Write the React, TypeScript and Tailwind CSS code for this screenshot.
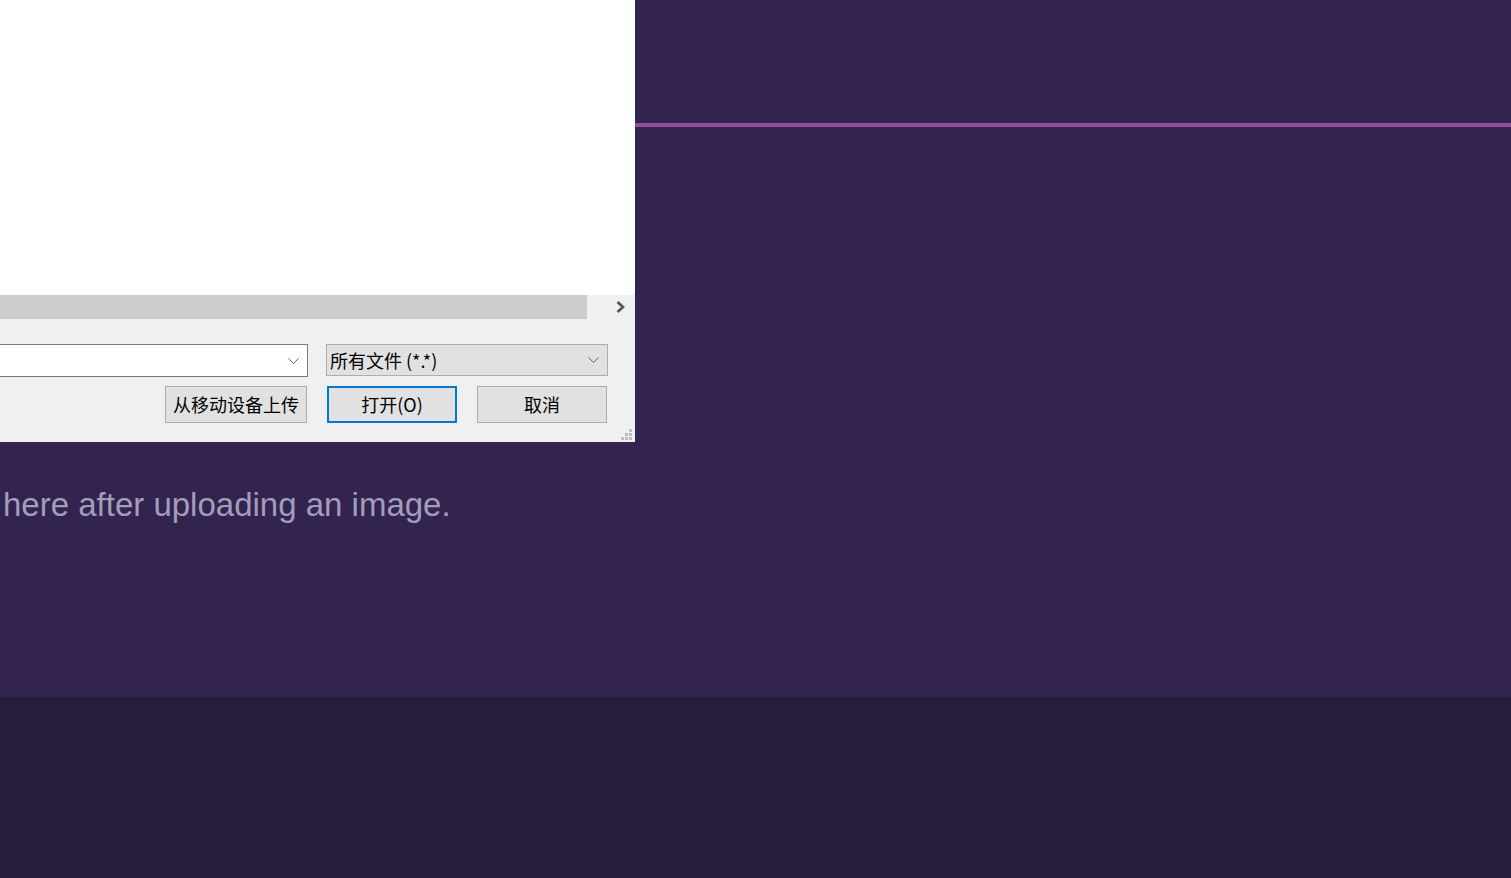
import React from 'react';

const cjk = { fontFamily: '"Microsoft YaHei", "Noto Sans CJK SC", "Liberation Sans", sans-serif' };

const Chevron = ({ className = '' }: { className?: string }) => (
  <svg width="11" height="6" viewBox="0 0 11 6" className={className}>
    <path d="M0.5 0.5 L5.5 5.5 L10.5 0.5" fill="none" stroke="#606060" strokeWidth="1" />
  </svg>
);

const ResizeGrip = () => (
  <div className="absolute right-[3px] bottom-[2px] grid grid-cols-3 gap-[1px]">
    {[0, 0, 1, 0, 1, 1, 1, 1, 1].map((on, i) => (
      <div key={i} className={on ? 'w-[3px] h-[3px] bg-[#bfbfbf]' : 'w-[3px] h-[3px]'} />
    ))}
  </div>
);

// Windows file picker, partly off-screen to the left
const FileDialog = () => (
  <div className="absolute left-0 top-0 w-[635px] h-[442px] flex flex-col bg-[#f0f0f0]" style={cjk}>
    <div className="h-[295px] bg-white" />
    <div className="h-[24px] flex items-center">
      <div className="w-[587px] h-full bg-[#cdcdcd]" />
      <div className="flex-1 flex justify-end pr-[9px]">
        <svg width="10" height="12" viewBox="0 0 10 12">
          <path d="M1.5 1 L7 6 L1.5 11" fill="none" stroke="#555555" strokeWidth="2.6" />
        </svg>
      </div>
    </div>
    <div className="relative flex-1">
      <div className="flex mt-[25px] h-[33px]">
        <div className="w-[308px] h-[33px] bg-white border border-[#7a7a7a] border-l-0 flex items-center justify-end pr-[8px]">
          <Chevron />
        </div>
        <div className="ml-[18px] w-[282px] h-[32px] bg-[#e1e1e1] border border-[#adadad] flex items-center justify-between pl-[3px] pr-[8px]">
          <span className="text-[18px] leading-none text-black">所有文件 (*.*)</span>
          <Chevron />
        </div>
      </div>
      <div className="flex mt-[9px] h-[37px]">
        <div className="ml-[165px] w-[142px] h-[37px] bg-[#e1e1e1] border border-[#adadad] flex items-center justify-center text-[18px] text-black">
          从移动设备上传
        </div>
        <div className="ml-[20px] w-[130px] h-[37px] bg-[#e1e1e1] border-2 border-[#0078d7] flex items-center justify-center text-[18px] text-black">
          打开(O)
        </div>
        <div className="ml-[20px] w-[130px] h-[37px] bg-[#e1e1e1] border border-[#adadad] flex items-center justify-center text-[18px] text-black">
          取消
        </div>
      </div>
      <ResizeGrip />
    </div>
  </div>
);

export default function App() {
  return (
    <div className="relative w-full h-[878px] overflow-hidden flex flex-col" style={{ fontFamily: '"Liberation Sans", Arial, sans-serif' }}>
      <main className="h-[697px] bg-[#32244f] flex flex-col">
        <div className="mt-[123px] h-[4px] bg-[#924c9b]" />
        <p className="mt-[355px] pl-[3px] text-[33px] leading-[46px] text-[#a49cbb] whitespace-nowrap">
          here after uploading an image.
        </p>
      </main>
      <footer className="flex-1 bg-[#261d3f]" />
      <FileDialog />
    </div>
  );
}
